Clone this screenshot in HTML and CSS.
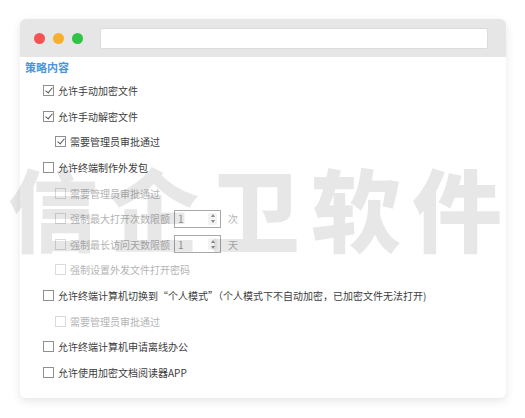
FILE: index.html
```html
<!DOCTYPE html>
<html lang="zh-CN">

    <head>

        <meta charset="UTF-8">
        <meta name="viewport" content="width=device-width, initial-scale=1.0">
        <title>策略内容</title>

        <link rel="stylesheet" href="styles.css">

    </head>

    <body>

        <main class="window">

            <header class="titlebar">
                <span class="dot red"></span>
                <span class="dot yellow"></span>
                <span class="dot green"></span>
                <div class="address"></div>
            </header>

            <section class="policy">

                <h1 class="policy-title">策略内容</h1>

                <label class="row"><span class="box checked"></span>允许手动加密文件</label>
                <label class="row"><span class="box checked"></span>允许手动解密文件</label>
                <label class="row sub"><span class="box checked"></span>需要管理员审批通过</label>
                <label class="row"><span class="box"></span>允许终端制作外发包</label>
                <label class="row sub off"><span class="box"></span>需要管理员审批通过</label>
                <label class="row sub off">
                    <span class="box"></span>强制最大打开次数限额
                    <span class="spin"><span class="spin-val">1</span><span class="spin-arrows"><i class="up"></i><i class="down"></i></span></span>
                    <span class="unit">次</span>
                </label>
                <label class="row sub off">
                    <span class="box"></span>强制最长访问天数限额
                    <span class="spin"><span class="spin-val">1</span><span class="spin-arrows"><i class="up"></i><i class="down"></i></span></span>
                    <span class="unit">天</span>
                </label>
                <label class="row sub off"><span class="box"></span>强制设置外发文件打开密码</label>
                <label class="row"><span class="box"></span>允许终端计算机切换到“个人模式”（个人模式下不自动加密，已加密文件无法打开)</label>
                <label class="row sub off"><span class="box"></span>需要管理员审批通过</label>
                <label class="row"><span class="box"></span>允许终端计算机申请离线办公</label>
                <label class="row"><span class="box"></span>允许使用加密文档阅读器APP</label>

            </section>

        </main>

        <div class="watermark">信企卫软件</div>

    </body>

</html>
```

FILE: styles.css
```css
* 
    {
        margin: 0;
        padding: 0;
        box-sizing: border-box;
    }

body 
    {
        font-family: 'Noto Sans CJK SC', 'Noto Sans', sans-serif;
        background-color: #fff;
        width: 525px;
        height: 418px;
        overflow: hidden;
        position: relative;
    }

.window 
    {
        margin: 19px 0 0 20px;
        width: 486px;
        height: 379px;
        border-radius: 6px;
        background-color: #fff;
        box-shadow: 0 3px 10px rgba(0, 0, 0, 0.10);
        overflow: hidden;
    }

.titlebar 
    {
        height: 38px;
        background-color: #e6e6e6;
        display: flex;
        align-items: center;
        padding: 0 18px 0 14px;
    }

.dot 
    {
        width: 11px;
        height: 11px;
        border-radius: 50%;
        margin-right: 8px;
        flex: none;
    }

.red { background-color: #f55353; }
.yellow { background-color: #f6b02c; }
.green { background-color: #2ec542; }

.address 
    {
        flex: 1;
        height: 21px;
        margin-left: 9px;
        margin-top: 1px;
        background-color: #fff;
        border: 1px solid #dcdcdc;
        border-radius: 2px;
    }

.policy 
    {
        padding: 0 0 0 5px;
    }

.policy-title 
    {
        font-size: 11px;
        font-weight: bold;
        color: #4a95d9;
        height: 21px;
        line-height: 20px;
    }

.row 
    {
        display: flex;
        align-items: center;
        height: 25.6px;
        padding-left: 18px;
        font-size: 10px;
        color: #3c3c3c;
        white-space: nowrap;
    }

.row.sub 
    {
        padding-left: 30px;
    }

.row.off 
    {
        color: #b4b4b4;
    }

.box 
    {
        width: 11px;
        height: 11px;
        border: 1px solid #909090;
        background-color: #fff;
        margin-right: 4px;
        position: relative;
        flex: none;
    }

.row.off .box 
    {
        border-color: #dadada;
    }

.box.checked::after 
    {
        content: '';
        position: absolute;
        left: 3px;
        top: 0px;
        width: 3px;
        height: 6px;
        border: solid #555;
        border-width: 0 1px 1px 0;
        transform: rotate(40deg);
    }

.spin 
    {
        display: flex;
        align-items: center;
        width: 47px;
        height: 18px;
        margin-left: 4px;
        border: 1px solid #a8a8a8;
        background-color: #fff;
    }

.spin-val 
    {
        flex: 1;
        padding-left: 3px;
        color: #999;
    }

.spin-arrows 
    {
        width: 9px;
        height: 12px;
        margin-right: 3px;
        display: flex;
        flex-direction: column;
        justify-content: space-around;
        align-items: center;
        border-radius: 2px;
        background-color: #f2f2f2;
    }

.spin-arrows i 
    {
        width: 0;
        height: 0;
        border-left: 2.5px solid transparent;
        border-right: 2.5px solid transparent;
    }

.spin-arrows .up 
    {
        border-bottom: 3px solid #888;
    }

.spin-arrows .down 
    {
        border-top: 3px solid #888;
    }

.unit 
    {
        margin-left: 7px;
    }

.watermark 
    {
        position: absolute;
        left: 8px;
        top: 150px;
        font-size: 90px;
        font-weight: 900;
        letter-spacing: 11px;
        line-height: 112px;
        color: rgba(0, 0, 0, 0.095);
        pointer-events: none;
        white-space: nowrap;
    }
```
